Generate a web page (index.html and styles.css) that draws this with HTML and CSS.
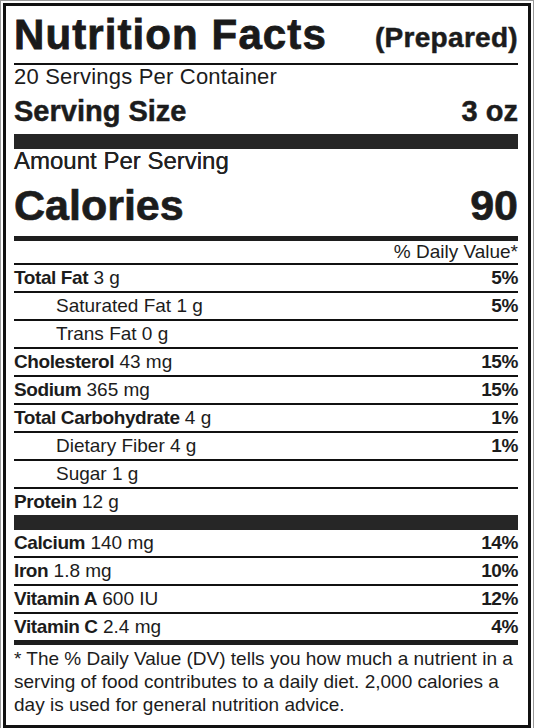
FILE: index.html
```html
<!DOCTYPE html>
<html lang="en">
<head>
    <meta charset="UTF-8">
    <meta name="viewport" content="width=device-width, initial-scale=1.0">
    <title>Nutrition Facts</title>
    <link rel="stylesheet" href="styles.css">
</head>
<body>

    <!-- Etiqueta nutricional -->
    <div class="label">
        <div class="label-head">
            <h1>Nutrition Facts</h1>
            <span class="prepared">(Prepared)</span>
        </div>

        <div class="servings">20 Servings Per Container</div>
        <div class="serving-size">
            <span>Serving Size</span>
            <span>3 oz</span>
        </div>

        <div class="amount">Amount Per Serving</div>
        <div class="calories">
            <span>Calories</span>
            <span>90</span>
        </div>

        <div class="dv-head">% Daily Value*</div>

        <!-- Filas de nutrientes -->
        <div class="row"><span><b>Total Fat</b> 3 g</span><b>5%</b></div>
        <div class="row sub"><span>Saturated Fat 1 g</span><b>5%</b></div>
        <div class="row sub"><span>Trans Fat 0 g</span></div>
        <div class="row"><span><b>Cholesterol</b> 43 mg</span><b>15%</b></div>
        <div class="row"><span><b>Sodium</b> 365 mg</span><b>15%</b></div>
        <div class="row"><span><b>Total Carbohydrate</b> 4 g</span><b>1%</b></div>
        <div class="row sub"><span>Dietary Fiber 4 g</span><b>1%</b></div>
        <div class="row sub"><span>Sugar 1 g</span></div>
        <div class="row row-thick"><span><b>Protein</b> 12 g</span></div>

        <div class="row"><span><b>Calcium</b> 140 mg</span><b>14%</b></div>
        <div class="row"><span><b>Iron</b> 1.8 mg</span><b>10%</b></div>
        <div class="row"><span><b>Vitamin A</b> 600 IU</span><b>12%</b></div>
        <div class="row row-end"><span><b>Vitamin C</b> 2.4 mg</span><b>4%</b></div>

        <p class="footnote">
            * The % Daily Value (DV) tells you how much a nutrient in a<br>
            serving of food contributes to a daily diet. 2,000 calories a<br>
            day is used for general nutrition advice.
        </p>
    </div>

</body>
</html>
```

FILE: styles.css
```css
/* Estilos generales */
body {
    margin: 0;
    padding: 0;
    background-color: #ffffff;
    font-family: "Liberation Sans", Arial, sans-serif;
    color: #1c1c1c;
}

/* Marco de la etiqueta */
.label {
    margin: 3px 5px 0 3px;
    padding: 6px 10px 9px 8px;
    border: 3px solid #111;
    box-shadow: 0 0 0 2px #fff, 0 0 0 3px #9a9a9a;
}

.label-head {
    display: flex;
    justify-content: space-between;
    align-items: baseline;
    padding-bottom: 5px;
    border-bottom: 2px solid #111;
}

.label-head h1 {
    margin: 0;
    font-size: 42px;
    line-height: 46px;
    font-weight: bold;
    letter-spacing: 1.1px;
    color: #1a1a1a;
    -webkit-text-stroke: 0.8px #1a1a1a;
}

.prepared {
    position: relative;
    top: -2px;
    font-size: 28px;
    font-weight: bold;
    letter-spacing: 0.3px;
    -webkit-text-stroke: 0.5px #1c1c1c;
}

.servings {
    font-size: 22px;
    line-height: 24px;
    letter-spacing: 0.2px;
}

.serving-size {
    display: flex;
    justify-content: space-between;
    padding: 6px 0 7px;
    font-size: 29px;
    line-height: 32px;
    font-weight: bold;
    -webkit-text-stroke: 0.5px #1c1c1c;
    border-bottom: 15px solid #262626;
}

.amount {
    font-size: 24px;
    line-height: 24px;
    color: #222;
    text-shadow: 0 0 0.5px #222;
}

.calories {
    display: flex;
    justify-content: space-between;
    margin-top: 9px;
    padding-bottom: 8px;
    font-size: 43px;
    line-height: 46px;
    font-weight: bold;
    -webkit-text-stroke: 0.7px #1c1c1c;
    border-bottom: 5px solid #1e1e1e;
}

.dv-head {
    text-align: right;
    font-size: 19px;
    line-height: 22px;
    border-bottom: 2px solid #111;
}

/* Filas de la tabla */
.row {
    display: flex;
    justify-content: space-between;
    height: 26px;
    font-size: 19px;
    line-height: 26px;
    border-bottom: 2px solid #111;
}

.row b {
    letter-spacing: -0.4px;
}

.sub {
    padding-left: 42px;
}

.row-thick {
    border-bottom: 15px solid #262626;
}

.row-end {
    border-bottom: 5px solid #1e1e1e;
}

.footnote {
    margin: 2px 0 0;
    font-size: 19px;
    line-height: 23px;
    white-space: nowrap;
}
```
